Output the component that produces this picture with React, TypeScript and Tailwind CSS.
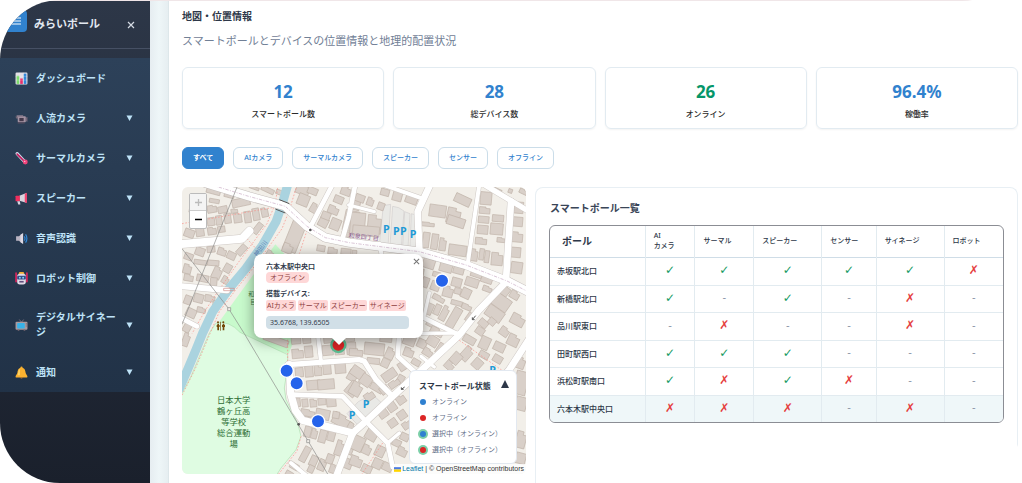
import { useState } from 'react';
import type { ReactNode } from 'react';
import clsx from 'clsx';

const ICONS: Record<string, ReactNode> = {
  chart: (
    <>
      <rect x="1" y="1" width="22" height="22" rx="2" fill="#e3dfe6" />
      <rect x="3" y="7" width="5" height="15" fill="#7ddc6e" />
      <rect x="9.5" y="12" width="5" height="10" fill="#e6316c" />
      <rect x="16" y="3" width="5" height="19" fill="#3287d8" />
      <path d="M1 8h22M1 15h22M8.700 1v22M15.300 1v22" stroke="#fff" strokeOpacity=".4" />
    </>
  ),
  camera: (
    <>
      <path d="M1 8l5 2v2H2z" fill="#6f6473" />
      <rect x="5" y="8" width="15" height="11" rx="1.500" fill="#a493a3" />
      <rect x="8" y="11" width="8" height="6" fill="#43394b" />
      <path d="M3 6h12v3H3z" fill="#8d7f90" />
      <path d="M20 10l3-1v9l-3-1z" fill="#75687a" />
      <path d="M5 19h13v2H5z" fill="#594d5f" />
    </>
  ),
  thermo: (
    <>
      <path d="M4 3L19 19" stroke="#cdd9ea" strokeWidth="6" strokeLinecap="round" />
      <path d="M4 4L18 18" stroke="#c2185b" strokeWidth="3" strokeLinecap="round" />
      <circle cx="19" cy="18.500" r="4.500" fill="#f0437a" />
      <circle cx="18" cy="17.500" r="1.300" fill="#ffc2d5" />
    </>
  ),
  mega: (
    <>
      <path d="M8 7L21 2v18L8 16z" fill="#d9d4de" />
      <path d="M18 3l4-1.500v19L18 19z" fill="#f3426f" />
      <path d="M1 8q0-1 1-1h7v10H2q-1 0-1-1z" fill="#ef2f5e" />
      <path d="M4 17h5l1 6H6z" fill="#d8d3df" />
    </>
  ),
  sound: (
    <>
      <path d="M2 8h5l7-5v18l-7-5H2z" fill="#b9b4c2" />
      <path d="M10 5l5-3v20l-5-3z" fill="#ded9e3" />
      <path d="M17 8q3 4 0 8M19.500 4.500q5 7.500 0 15" stroke="#2f86d6" strokeWidth="2.200" fill="none" />
    </>
  ),
  robot: (
    <>
      <rect x="7" y="0" width="10" height="5" rx="2.500" fill="#f2b035" />
      <path d="M2 2v16M22 2v16" stroke="#e0245e" strokeWidth="3" strokeLinecap="round" />
      <rect x="4" y="3" width="16" height="20" rx="5" fill="#e0d8e6" />
      <rect x="4" y="7" width="16" height="7" rx="2" fill="#344c86" />
      <circle cx="9" cy="10.500" r="1.800" fill="#7fd3f5" />
      <circle cx="15" cy="10.500" r="1.800" fill="#7fd3f5" />
      <rect x="8" y="16.500" width="8" height="3" fill="#60507c" />
    </>
  ),
  tv: (
    <>
      <path d="M8 1l4 5 4-5" stroke="#857b88" strokeWidth="1.500" fill="none" />
      <rect x="1" y="5" width="22" height="15" rx="2" fill="#a99a9f" />
      <rect x="4" y="7.500" width="14" height="10" rx="1.500" fill="#38b2e8" />
      <path d="M5 20h3v2H5zM16 20h3v2h-3zM20 8h1.500v2H20zM20 12h1.500v2H20z" fill="#645a66" />
    </>
  ),
  bell: (
    <>
      <circle cx="12" cy="3" r="2" fill="#f5b12f" />
      <path d="M12 3c-6 0-7 5-7.500 9S1 17 1 20q0 1 1 1h20q1 0 1-1c0-3-3-4-3.500-8S18 3 12 3z" fill="#fbb130" />
      <path d="M9 5c-3 2-3 8-4 12h4z" fill="#ffd567" />
      <path d="M9 21h6q-3 4-6 0z" fill="#d57a1c" />
    </>
  ),
};

const MENU = [
  { label: 'ダッシュボード', icon: 'chart', open: false },
  { label: '人流カメラ', icon: 'camera', open: true },
  { label: 'サーマルカメラ', icon: 'thermo', open: true },
  { label: 'スピーカー', icon: 'mega', open: true },
  { label: '音声認識', icon: 'sound', open: true },
  { label: 'ロボット制御', icon: 'robot', open: true },
  { label: 'デジタルサイネージ', icon: 'tv', open: true },
  { label: '通知', icon: 'bell', open: true },
];

const STATS = [
  { value: '12', label: 'スマートポール数' },
  { value: '28', label: '総デバイス数' },
  { value: '26', label: 'オンライン', green: true },
  { value: '96.4%', label: '稼働率' },
];

const FILTERS = ['すべて', 'AIカメラ', 'サーマルカメラ', 'スピーカー', 'センサー', 'オフライン'];

// one character per device column: o = online, x = offline, - = not installed
const POLES = [
  { name: '赤坂駅北口', devices: 'ooooox' },
  { name: '新橋駅北口', devices: 'o-o-x-' },
  { name: '品川駅東口', devices: '-x--x-' },
  { name: '田町駅西口', devices: 'ooo---' },
  { name: '浜松町駅南口', devices: 'oxox--' },
  { name: '六本木駅中央口', devices: 'xxx-x-' },
];

// building footprints per tile: centre x, centre y, width, height, rotation
const TILES: { x: number; y: number; blocks: number[][] }[] = [
  {
    x: -8, y: -6,
    blocks: [
      [102, 20, 42, 14, 15], [150, 30, 30, 16, 15], [185, 52, 54, 24, -12], [130, 74, 28, 20, -12], [98, 72, 28, 22, -10], [105, 48, 30, 12, 10],
      [30, 145, 30, 24, 20], [62, 140, 24, 28, -8], [95, 110, 22, 24, -8], [119, 106, 18, 28, -8], [98, 138, 26, 22, -8], [126, 133, 22, 18, -8],
      [145, 100, 20, 30, -8], [175, 98, 24, 30, -8], [205, 96, 20, 34, -8], [230, 88, 20, 36, -10], [256, 82, 20, 28, -12], [235, 130, 18, 36, 38],
      [45, 75, 30, 18, 10], [165, 78, 20, 12, -8], [62, 200, 28, 24, 20], [95, 193, 24, 18, -5], [128, 200, 26, 22, 18], [156, 212, 26, 22, 25],
      [28, 215, 26, 20, 20], [24, 252, 24, 28, 15], [64, 232, 40, 14, 8], [102, 234, 34, 16, 5], [113, 264, 26, 36, 25], [145, 250, 22, 26, 30],
      [187, 195, 20, 34, 42], [28, 278, 28, 20, 10], [70, 280, 36, 20, 12], [103, 290, 20, 24, 5], [138, 285, 20, 22, 30], [26, 345, 22, 26, 20],
      [58, 340, 28, 26, 15], [92, 340, 30, 20, 8], [112, 355, 22, 14, 10], [35, 384, 30, 26, 25], [66, 375, 26, 16, 12], [25, 425, 22, 34, 30],
      [345, 155, 42, 92, 22], [325, 190, 30, 28, 22], [370, 15, 40, 28, 22], [372, 45, 34, 34, 22], [405, 70, 24, 28, 30], [400, 18, 30, 20, 22],
      [265, 15, 40, 14, 25], [225, 8, 30, 10, 20], [300, 22, 20, 14, 22], [432, 112, 28, 28, 28], [462, 75, 32, 24, 22], [478, 44, 28, 22, 22],
      [440, 92, 26, 22, 22], [500, 18, 30, 26, 20], [468, 118, 30, 34, 22], [515, 108, 42, 62, 12], [530, 55, 26, 40, 12], [500, 148, 26, 16, 12],
      [425, 190, 24, 18, 10], [460, 198, 28, 20, 8], [500, 200, 30, 18, 6], [525, 205, 14, 18, 6], [272, 205, 20, 16, 30],
    ],
  },
  {
    x: 502, y: -6,
    blocks: [
      [32, 40, 28, 22, 20], [63, 50, 20, 24, 20], [95, 64, 20, 22, 20], [107, 22, 26, 20, 15], [145, 30, 28, 36, 15], [187, 42, 36, 28, 20],
      [25, 115, 44, 64, 5], [75, 118, 40, 56, 5], [50, 138, 80, 30, 5], [265, 78, 50, 36, 8], [313, 92, 40, 46, 12], [320, 110, 54, 28, 18],
      [340, 45, 50, 26, 25], [236, 118, 38, 12, 5], [230, 165, 20, 46, 8], [256, 170, 20, 46, 8], [280, 178, 20, 38, 8], [325, 196, 54, 32, 8],
      [410, 40, 34, 38, 5], [406, 76, 32, 20, 5], [403, 104, 32, 20, 5], [400, 134, 32, 26, 5], [395, 168, 34, 20, 5], [446, 100, 34, 20, 5],
      [442, 132, 38, 34, 5], [375, 210, 20, 36, 8], [397, 208, 14, 34, 8], [413, 215, 14, 36, 8], [443, 222, 34, 38, 5], [508, 68, 28, 34, 5],
      [503, 110, 34, 28, 5], [502, 156, 36, 30, 5], [497, 202, 34, 30, 5], [502, 248, 34, 34, 8], [455, 165, 24, 14, 5], [440, 16, 34, 14, 25],
      [483, 18, 12, 12, 20], [522, 20, 24, 14, 25], [238, 236, 36, 28, 18], [290, 247, 38, 28, 15], [328, 255, 32, 24, 15], [262, 268, 24, 14, 15],
      [258, 303, 26, 28, 20], [296, 320, 30, 32, 15], [322, 292, 30, 26, 15], [368, 292, 40, 26, 18], [382, 268, 36, 18, 18], [350, 325, 28, 30, 25],
      [325, 318, 20, 18, 15], [268, 340, 38, 16, 28], [240, 372, 20, 34, 24], [264, 374, 18, 32, 24], [285, 385, 20, 46, 28], [314, 398, 26, 64, 30],
      [322, 354, 34, 14, 15], [352, 366, 30, 16, 22], [362, 398, 22, 28, 35], [468, 320, 22, 28, 38], [496, 330, 28, 24, 30], [456, 352, 54, 40, 35],
      [436, 386, 54, 36, 35], [505, 405, 42, 32, 28], [402, 415, 28, 22, 40], [428, 410, 22, 20, 40], [465, 440, 28, 26, 35], [392, 438, 26, 22, 35],
      [228, 292, 20, 30, 20], [414, 312, 28, 16, 20], [412, 284, 34, 20, 18], [248, 418, 34, 18, 28], [262, 440, 40, 22, 28], [212, 268, 20, 34, 10],
    ],
  },
  {
    x: -8, y: 438,
    blocks: [
      [290, 22, 76, 20, 20], [20, 20, 20, 40, 20], [350, 20, 28, 26, -5], [382, 18, 24, 26, -5], [355, 62, 34, 28, -5], [388, 56, 24, 34, -5],
      [445, 52, 32, 30, -5], [480, 48, 28, 34, -5], [516, 46, 28, 36, -5], [450, 18, 34, 24, -5], [510, 12, 30, 28, -5], [360, 118, 24, 28, -5],
      [389, 115, 24, 34, -5], [416, 112, 22, 32, -5], [443, 108, 24, 32, -5], [483, 106, 32, 30, -5], [520, 128, 28, 32, 30], [402, 156, 40, 28, -5],
      [440, 154, 50, 30, -5], [520, 168, 34, 42, 40], [353, 208, 20, 26, -5], [377, 210, 18, 24, -5], [402, 210, 20, 24, -5], [428, 206, 24, 20, -5],
      [456, 208, 28, 26, -5], [385, 240, 42, 20, 10], [430, 244, 42, 30, 12], [378, 258, 30, 14, 10], [488, 264, 58, 34, 28], [470, 246, 20, 20, 10],
      [385, 296, 20, 32, 15], [405, 302, 18, 30, 15], [430, 310, 22, 38, 15], [456, 308, 22, 32, 15], [480, 345, 22, 46, 18], [377, 364, 20, 48, 28],
      [403, 384, 22, 32, 25], [428, 396, 22, 34, 22], [452, 378, 22, 28, 20], [395, 408, 18, 22, 25], [462, 408, 22, 26, 20], [512, 345, 22, 38, 22],
      [505, 392, 26, 30, 22], [530, 330, 20, 40, 22], [345, 400, 26, 18, 30], [330, 422, 22, 14, 30],
    ],
  },
  {
    x: 502, y: 438,
    blocks: [
      [75, 48, 60, 36, 6], [20, 58, 40, 22, 4], [110, 15, 36, 24, 6], [72, 84, 38, 18, 6], [122, 62, 26, 34, 25], [108, 90, 24, 26, 25],
      [180, 22, 36, 30, 20], [178, 58, 30, 26, 20], [218, 32, 28, 26, 25], [250, 24, 34, 30, 32], [235, 58, 30, 22, 32], [275, 48, 24, 34, 32],
      [200, 88, 26, 18, 30], [162, 98, 30, 26, -32], [120, 126, 44, 28, -35], [153, 140, 20, 28, 30], [135, 152, 34, 20, -35], [24, 118, 40, 30, 35],
      [50, 142, 34, 32, 35], [20, 168, 34, 40, 30], [82, 165, 40, 20, 30], [105, 170, 26, 24, -35], [60, 190, 30, 24, -35], [102, 242, 28, 24, -35],
      [128, 222, 26, 26, -35], [155, 200, 26, 26, -35], [130, 270, 26, 24, -35], [158, 246, 26, 26, -35], [172, 276, 26, 22, -35], [166, 312, 26, 22, 25],
      [142, 330, 26, 20, 25], [158, 356, 30, 26, 25], [22, 330, 44, 44, 25], [66, 306, 34, 32, 30], [52, 350, 26, 28, 25], [92, 355, 28, 32, 25],
      [84, 392, 28, 30, 25], [20, 385, 36, 30, 20], [52, 408, 30, 24, 25], [114, 402, 30, 24, 25], [352, 62, 28, 44, 42], [320, 76, 28, 34, 42],
      [384, 92, 28, 30, 42], [300, 98, 28, 24, 42], [406, 30, 30, 38, 25], [450, 42, 34, 26, 25], [492, 22, 34, 34, 25], [404, 66, 30, 20, 30],
      [445, 78, 28, 22, 30], [514, 90, 26, 34, 20], [515, 150, 40, 70, 15], [515, 212, 34, 40, 15], [515, 320, 30, 50, 15], [514, 376, 30, 32, 15],
      [360, 20, 38, 22, 30], [5, 285, 24, 30, 30],
    ],
  },
];

const ROADS: [string, number][] = [
  ['M-10 172L180 155L202 132', 24],
  ['M-10 297L135 310', 18],
  ['M385 120L452-8', 14],
  ['M480 160L500 90L520-8', 14],
  ['M500 54L577 74', 10],
  ['M600-8L720 34', 12],
  ['M745-8L707 74L712 190', 20],
  ['M892-8L857 230', 12],
  ['M905-8L1042 74', 16],
  ['M987 44L972 280', 20],
  ['M975 282L890 370L832 444L742 528L632 628L552 703L512 738L462 870', 20],
  ['M720 390L832 444', 14],
  ['M742 318L727 384', 10],
  ['M317 533L532 518L547 523L582 578L632 628', 16],
  ['M332 623L482 628L552 703L617 768L632 840', 14],
  ['M322 533L326 620L340 670L362 700L512 738', 22],
  ['M407 438L417 524', 12],
  ['M652 438L647 508L702 558', 14],
  ['M717 508L757 540', 10],
  ['M617 768L652 738', 10],
  ['M1042 455L982 548L900 640', 20],
  ['M327 828L372 865', 12],
  ['M-10 390L45 418', 14],
  ['M592 170L600 210', 12],
  ['M620 440L832 438L850 420', 10],
];

const MAIN_ROAD = 'M70-12L200 28L310 58L375 118L430 152L502 167L712 194L852 234L975 282L1042 316';
const RIVER = 'M318-10L300 54L282 104L242 174L192 244L142 304L92 374L62 438L42 488L18 545L-10 610';
const PATHS = [
  'M345-6L322 70L300 125L222 232L160 310L112 374L84 440L40 545L0 625',
  'M288-6L280 50L255 110L170 225L110 310L70 370L30 440',
  'M0 110L270 62M195 155L222 185M375 130L352 200',
  'M317 438L317 535M357 748L345 792L290 861',
  'M832 460L960 550M602 768L540 861M632 192L720 220',
];

const PARKING = [[613, 129], [643, 134], [664, 134], [693, 142], [510, 687], [552, 653], [932, 552]];
const POLES_ON_MAP = [[780, 281], [314, 551], [344, 589], [408, 703]];

function MapCanvas() {
  return (
    <svg viewBox="0 0 1032 861" preserveAspectRatio="xMinYMin slice" className="block h-full w-full" role="img" aria-label="地図">
      <rect width="1032" height="861" fill="#f2efe9" />
      <path d="M280 172L115 400L90 440L320 500L400 300z" fill="#c8facc" />
      <path d="M102 408q40-8 72 28L317 503L317 538L307 603L312 638L347 708L357 748L342 788L297 843L280 870H-5V628L27 568L82 438z" fill="#dffce2" stroke="#aedfb0" strokeWidth="2" />
      <g fill="#e9e9e6" stroke="#d2cfcf" strokeWidth="2">
        <path d="M604 56l22-4l-8 126l-26-4zM632 58l18 4l16 10l-8 110l-34-6zM668 74l16 6l-6 102l-16-4zM688 80l14 4v98l-18-4z" />
        <path d="M495 680l34-36l42-22l28 26l-46 44l-22 26z" />
      </g>
      {TILES.map((tile, t) => (
        <g key={t} transform={`translate(${tile.x} ${tile.y})`} fill="#d9d0c9" stroke="#c0b3a9" strokeWidth="2">
          {tile.blocks.map(([cx, cy, w, h, r], i) => (
            <path
              key={i}
              transform={`translate(${cx} ${cy}) rotate(${r})`}
              d={i % 3 === 1
                ? `M${-w / 2} ${-h / 2}h${w * 0.6}v${h * 0.2}h${w * 0.4}v${h * 0.8}h${-w}z`
                : `M${-w / 2} ${-h / 2}h${w}v${h}h${-w}z`}
            />
          ))}
        </g>
      ))}
      <path d={RIVER} fill="none" stroke="#aad3df" strokeWidth="27" />
      <g fill="none" stroke="#fa8e87" strokeWidth="2" strokeDasharray="5 5">
        {PATHS.map((d) => <path key={d} d={d} />)}
      </g>
      <g fill="none" strokeLinejoin="round" strokeLinecap="round">
        {ROADS.map(([d, w]) => <path key={d} d={d} stroke="#cfc9c5" strokeWidth={w + 3} />)}
        <path d={MAIN_ROAD} stroke="#c4bebb" strokeWidth="28" />
        {ROADS.map(([d, w]) => <path key={d} d={d} stroke="#fff" strokeWidth={w} />)}
        <path d={MAIN_ROAD} stroke="#fff" strokeWidth="25" />
      </g>
      <path d={MAIN_ROAD} fill="none" stroke="#c9aac4" strokeWidth="2" strokeDasharray="10 4 3 4" />
      <path d="M292 38l30 12M280 66l30 12" stroke="#555" strokeWidth="3" />
      <g fill="none" stroke="#8a8a88" strokeWidth="2">
        <path d="M166-2L0 412M0 185L140 365L187 440L437 861" />
        <path d="M137 362h9v9h-9zM374 758h9v9h-9z" fill="#f2efe9" />
        <path d="M125 304h32v7h-32z" stroke="#d08c86" />
      </g>
      <path d="M881 386l-10 12m0-7v7h7M668 600l-10 7m0-6v6h7" stroke="#555" strokeWidth="3" fill="none" />
      <circle cx="385" cy="129" r="4" fill="#555" />
      <circle cx="350" cy="712" r="4" fill="#555" />
      {/* restroom marker */}
      <g fill="#734a08">
        <path d="M106 410h5v20h-5zM115 404h2v27h-2zM122 410h5v20h-5z" />
        <circle cx="108" cy="406" r="3" />
        <circle cx="124" cy="406" r="3" />
        <path d="M104 414h9v6h-9zM120 414h9v6h-9z" />
      </g>
      <g className="font-['Noto_Sans_CJK_JP',sans-serif]" textAnchor="middle">
        <text x="236" y="190" fontSize="18" fill="#5b82b8" transform="rotate(-52 236 184)">神田川</text>
        <text x="545" y="156" fontSize="18" fill="#8b5d93" transform="rotate(6 545 150)">和泉四丁目</text>
        <text x="208" y="326" fontSize="18" fill="#3b7a44">和</text>
        <text x="214" y="352" fontSize="18" fill="#3b7a44">目</text>
        <g fontSize="25" fill="#2d6e34">
          <text x="155" y="648">日本大学</text>
          <text x="155" y="681">鶴ヶ丘高</text>
          <text x="155" y="714">等学校</text>
          <text x="155" y="747">総合運動</text>
          <text x="155" y="780">場</text>
        </g>
      </g>
      <g className="font-['Open_Sans',sans-serif] font-bold" fontSize="32" fill="#1e9ad6" textAnchor="middle">
        {PARKING.map(([x, y]) => <text key={x} x={x} y={y + 10}>P</text>)}
      </g>
      <g fill="#2563eb" stroke="#fff" strokeWidth="4">
        {POLES_ON_MAP.map(([x, y]) => <circle key={x} cx={x} cy={y} r="20" />)}
      </g>
      <circle cx="469" cy="474" r="21" fill="#dc2626" stroke="#5cbd92" strokeWidth="7" />
    </svg>
  );
}

function Sidebar() {
  return (
    <aside className="w-[150px] shrink-0 bg-linear-to-b from-[#2d3748] to-[#1a202c]">
      <div className="flex h-[48px] items-center border-b border-[#465064] pr-[15px]">
        <div className="-mt-2 ml-[5px] flex h-[22px] w-[22px] items-center justify-center rounded bg-[#3182ce]">
          <svg viewBox="0 0 12 12" className="h-3 w-3"><path d="M0 3h11M0 6h11M0 9h11" stroke="#fff" strokeWidth="1" /></svg>
        </div>
        <span className="ml-[7px] flex-1 text-[11px] font-bold text-[#e2e8f0]">みらいポール</span>
        <button aria-label="閉じる" className="text-[#d5dbe4]">
          <svg viewBox="0 0 8 8" className="h-2 w-2"><path d="M1 1l6 6M7 1L1 7" stroke="currentColor" strokeWidth="1.200" /></svg>
        </button>
      </div>
      <nav className="mt-[9px] bg-linear-to-b from-[#2d4159] to-[#213247]">
        {MENU.map((m) => (
          <a key={m.label} href="#" className="flex min-h-10 items-center py-3 pr-[17px] pl-[15px] text-[10px] leading-[15px] font-bold text-[#bee3f8]">
            <svg viewBox="0 0 24 24" className="mr-2 h-[13px] w-[13px] shrink-0">{ICONS[m.icon]}</svg>
            <span className="w-[78px] flex-1 break-all">{m.label}</span>
            {m.open && (
              <svg viewBox="0 0 7 6" className="ml-2 h-[6px] w-[7px] shrink-0"><path d="M0.500 0.500h6L3.500 6z" fill="#bee3f8" /></svg>
            )}
          </a>
        ))}
      </nav>
    </aside>
  );
}

function Popup() {
  return (
    <div className="absolute top-[67px] left-[72px] w-[169px]">
      <div className="h-[84px] rounded-lg bg-white px-3 pt-[7px] text-[#333c4d] shadow-[0_3px_14px_rgba(0,0,0,0.4)]">
        <button aria-label="閉じる" className="absolute top-[4px] right-[3px] text-[#757575]">
          <svg viewBox="0 0 8 8" className="h-[7px] w-[7px]"><path d="M1 1l6 6M7 1L1 7" stroke="currentColor" strokeWidth="1.200" /></svg>
        </button>
        <p className="text-[7px] leading-[11px] font-bold">六本木駅中央口</p>
        <div className="flex text-[7px] leading-[11px]">
          <span className="rounded-sm bg-[#fed7d7] px-1 text-[#8f3f3f]">オフライン</span>
        </div>
        <p className="mt-[5px] text-[7px] leading-[11px] font-bold">搭載デバイス:</p>
        <div className="mt-px flex gap-[2px] text-[7px] leading-[11px] whitespace-nowrap text-[#8f3f3f]">
          {['AIカメラ', 'サーマル', 'スピーカー', 'サイネージ'].map((d) => (
            <span key={d} className="rounded-xs bg-[#fed7d7] px-px">{d}</span>
          ))}
        </div>
        <p className="mt-[5px] mr-[2px] rounded-sm bg-[#d1dfe7] px-1 text-[7px] leading-[13px]">35.6768, 139.6505</p>
      </div>
      <svg viewBox="0 0 14 7" className="relative mx-auto block h-[7px] w-[14px]"><path d="M0 0h14L7 7z" fill="#fff" /></svg>
    </div>
  );
}

const LEGEND = [
  { label: 'オンライン', dot: 'bg-[#2f80d0]' },
  { label: 'オフライン', dot: 'bg-[#dc2626]' },
  { label: '選択中（オンライン）', dot: 'bg-[#2f80d0] ring-2 ring-[#7ccfa8]' },
  { label: '選択中（オフライン）', dot: 'bg-[#dc2626] ring-2 ring-[#7ccfa8]' },
];

function MapPanel() {
  return (
    <section className="relative h-[287px] overflow-hidden rounded-md">
      <MapCanvas />
      <div className="absolute top-[6px] left-[7px] flex flex-col rounded-xs border border-[#bbb] bg-white">
        <button aria-label="拡大" className="flex h-[17px] w-4 items-center justify-center border-b border-[#ccc] bg-[#f4f4f4] text-[#bbb]">
          <svg viewBox="0 0 8 8" className="h-[7px] w-[7px]"><path d="M0 4h8M4 0v8" stroke="currentColor" strokeWidth="1.500" /></svg>
        </button>
        <button aria-label="縮小" className="flex h-[17px] w-4 items-center justify-center text-black">
          <svg viewBox="0 0 8 8" className="h-[7px] w-[7px]"><path d="M0 4h8" stroke="currentColor" strokeWidth="1.800" /></svg>
        </button>
      </div>
      <Popup />
      <div className="absolute right-[9px] bottom-[10px] w-[108px] rounded-md border border-[#e2e8f0] bg-white pt-[7px] pr-[7px] pb-[5px] pl-[9px]">
        <div className="flex items-center justify-between">
          <h3 className="text-[8px] leading-4 font-bold whitespace-nowrap text-[#2d3748]">スマートポール状態</h3>
          <button aria-label="凡例を閉じる" className="-mt-1">
            <svg viewBox="0 0 8 8" className="h-2 w-2"><path d="M4 0l4 8H0z" fill="#2d3748" /></svg>
          </button>
        </div>
        <ul>
          {LEGEND.map((l) => (
            <li key={l.label} className="flex items-center gap-[6px] pl-px text-[7px] leading-4 text-[#5f6f88]">
              <span className={clsx('h-[6px] w-[6px] rounded-full', l.dot)} />
              {l.label}
            </li>
          ))}
        </ul>
      </div>
      <div className="absolute right-0 bottom-0 flex items-center bg-white/80 px-[2px] font-['Liberation_Sans',Arial,sans-serif] text-[7px] leading-[10px] text-[#333]">
        <svg viewBox="0 0 12 8" className="mr-px h-[5px] w-[7px]"><path fill="#4c7be1" d="M0 0h12v4H0z" /><path fill="#ffd500" d="M0 4h12v4H0z" /></svg>
        <a href="#" className="text-[#0078a8]">Leaflet</a>
        <span className="whitespace-pre"> | © OpenStreetMap contributors</span>
      </div>
    </section>
  );
}

function DeviceMark({ state }: { state: string }) {
  if (state === 'o') return <span className="text-[12px] text-[#169a62]">✓</span>;
  if (state === 'x') return <span className="text-[12px] text-[#e53e3e]">✗</span>;
  return <span className="text-[10px] text-[#8a94a6]">-</span>;
}

function PoleTable() {
  return (
    <section className="rounded-t-lg border border-b-0 border-[#e8eff4] px-[13px] pt-3">
      <h2 className="pl-px text-[10px] leading-4 font-bold text-[#3a4557]">スマートポール一覧</h2>
      <div className="mt-[9px] overflow-hidden rounded-md border border-[#8b8d94]">
        <table className="w-full table-fixed border-collapse">
          <colgroup>
            <col className="w-[21%]" />
            <col className="w-[11%]" />
            <col className="w-[13%]" />
            <col className="w-[15%]" />
            <col className="w-[12%]" />
            <col className="w-[15%]" />
            <col className="w-[13%]" />
          </colgroup>
          <thead>
            <tr className="h-[31px] border-b border-[#cfdde7] text-left text-[7px] leading-[10px] text-[#2d3748]">
              <th className="pl-3 text-[10px] font-bold">ポール</th>
              <th className="border-l border-[#e2ebf0] pl-2 font-medium">AI<br />カメラ</th>
              {['サーマル', 'スピーカー', 'センサー', 'サイネージ', 'ロボット'].map((c) => (
                <th key={c} className="border-l border-[#e2ebf0] pl-2 font-medium">{c}</th>
              ))}
            </tr>
          </thead>
          <tbody>
            {POLES.map((p, i) => (
              <tr
                key={p.name}
                className={clsx('text-[8px]', i % 2 ? 'h-[27px]' : 'h-[28px]', i > 0 && 'border-t border-[#e2ebf0]', i === 5 && 'bg-[#eff7f9]')}
              >
                <td className="pl-[7px] font-medium text-[#2d3748]">{p.name}</td>
                {p.devices.split('').map((d, j) => (
                  <td key={j} className="border-l border-[#e2ebf0] text-center font-['DejaVu_Sans',sans-serif] leading-4">
                    <DeviceMark state={d} />
                  </td>
                ))}
              </tr>
            ))}
          </tbody>
        </table>
      </div>
    </section>
  );
}

export default function App() {
  const [filter, setFilter] = useState('すべて');

  return (
    <div className="flex h-screen flex-col overflow-hidden rounded-[60px] bg-white font-['Noto_Sans','Noto_Sans_CJK_JP',sans-serif]">
      <div className="h-px shrink-0 bg-[#f0e6e8]" />
      <div className="flex min-h-0 flex-1">
        <Sidebar />
        <div className="w-[19px] shrink-0 border-r border-[#dde7ea] bg-linear-to-r from-[#e6edf1] via-[#eef6f8] to-[#e6eef1]" />
        <main className="flex min-w-0 flex-1 flex-col pr-1 pl-[13px]">
          <h1 className="pt-[7px] text-[10px] leading-4 font-bold text-[#2d3748]">地図・位置情報</h1>
          <p className="mt-[9px] text-[11px] leading-4 text-[#718096]">スマートポールとデバイスの位置情報と地理的配置状況</p>

          <div className="mt-[18px] grid grid-cols-4 gap-[9px]">
            {STATS.map((s) => (
              <div key={s.label} className="flex h-[62px] flex-col items-center rounded-md border border-[#e2ebf1] pt-3 shadow-xs">
                <p className={clsx('text-[17px] leading-6 font-bold', s.green ? 'text-[#059669]' : 'text-[#3182ce]')}>{s.value}</p>
                <p className="mt-1 text-[8px] leading-3 font-medium text-[#2b2b2b]">{s.label}</p>
              </div>
            ))}
          </div>

          <div className="mt-[18px] flex gap-[9px]">
            {FILTERS.map((f) => (
              <button
                key={f}
                onClick={() => setFilter(f)}
                className={clsx(
                  'h-[22px] rounded-md border px-[10px] text-[7px]',
                  f === filter ? 'border-[#3182ce] bg-[#3182ce] font-bold text-white' : 'border-[#cbdde9] bg-white font-medium text-[#3182ce]',
                )}
              >
                {f}
              </button>
            ))}
          </div>

          <div className="mt-[18px] grid flex-1 grid-cols-[344fr_483fr] gap-[9px]">
            <MapPanel />
            <PoleTable />
          </div>
        </main>
      </div>
    </div>
  );
}
